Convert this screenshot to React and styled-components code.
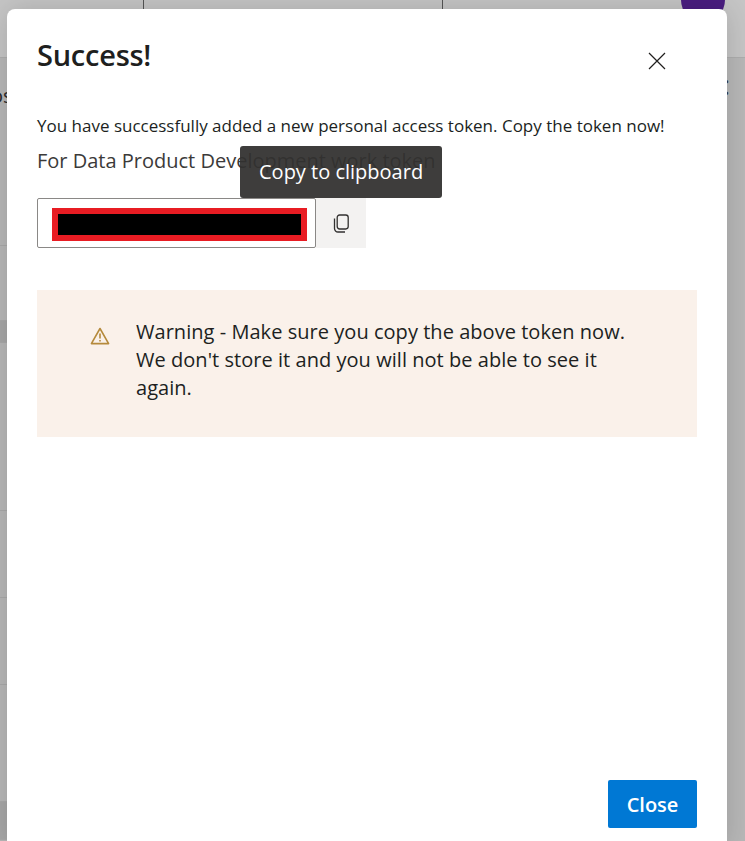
import React from 'react';
import styled, { createGlobalStyle } from 'styled-components';

const GlobalStyle = createGlobalStyle`
  html, body {
    margin: 0;
    padding: 0;
    height: 841px;
    overflow: hidden;
    background: #b8b8b8;
  }
`;

// rows of the table behind the dialog, only their edges show
const backRows = [
    { height: 116, text: 'os', side: ':', open: true },
    { height: 72, text: 'i' },
    { height: 75 },
    { height: 22, band: true },
    { height: 168 },
    { height: 87 },
    { height: 87 },
    { height: 117 },
    { height: 38, band: true },
];

const App = () => {
    return (
        <Page>
            <GlobalStyle />
            <BackHeader>
                <BackCell />
                <BackCell />
                <BackAvatarCell>
                    <Avatar />
                </BackAvatarCell>
            </BackHeader>
            {backRows.map((row, index) => (
                <BackRow key={index} $height={row.height} $band={row.band} $open={row.open}>
                    <BackText>{row.text}</BackText>
                    <BackSide>{row.side}</BackSide>
                </BackRow>
            ))}
            <Modal>
                <ModalHeader>
                    <Title>Success!</Title>
                    <CloseButton aria-label="Close">
                        <svg width="18" height="18" viewBox="0 0 18 18" fill="none" stroke="#201f1e" strokeWidth="1.2">
                            <path d="M1 1 L17 17 M17 1 L1 17" />
                        </svg>
                    </CloseButton>
                </ModalHeader>

                <Message>You have successfully added a new personal access token. Copy the token now!</Message>
                <TokenName>For Data Product Development work token</TokenName>

                <TokenRow>
                    <TokenBox>
                        <Redaction />
                    </TokenBox>
                    <CopyButton aria-label="Copy to clipboard">
                        <svg width="17" height="19" viewBox="0 0 17 19" fill="none" stroke="#323130" strokeWidth="1.3">
                            <rect x="4.2" y="1" width="11" height="14" rx="2.4" />
                            <path d="M1.5 4.5 V14.5 A3.5 3.5 0 0 0 5 18 H12" />
                        </svg>
                    </CopyButton>
                    <Tooltip>Copy to clipboard</Tooltip>
                </TokenRow>

                <WarningBar>
                    <svg width="20" height="18" viewBox="0 0 20 18" fill="none" stroke="#b58a3c" strokeWidth="1.6">
                        <path d="M10 1.5 L18.6 16.6 H1.4 Z" strokeLinejoin="round" />
                        <path d="M10 6.5 V11.5 M10 13 V14.6" />
                    </svg>
                    <WarningText>
                        Warning - Make sure you copy the above token now. We don't store it and you will not be able to see it again.
                    </WarningText>
                </WarningBar>

                <Footer>
                    <PrimaryButton>Close</PrimaryButton>
                </Footer>
            </Modal>
        </Page>
    );
};

export default App;

const Page = styled.div`
  position: relative;
  width: 745px;
  height: 841px;
  overflow: hidden;
  background: #b8b8b8;
  font-family: "Open Sans", "Noto Sans", sans-serif;
`;

const BackHeader = styled.div`
  display: grid;
  grid-template-columns: 144px 299px 1fr;
  height: 57px;
  background: #c6c6c6;
  border-bottom: 1px solid #aeaeae;
`;

const BackCell = styled.div`
  border-right: 1px solid #555555;
`;

const BackAvatarCell = styled.div`
  display: flex;
  justify-content: flex-end;
  padding-right: 20px;
`;

const Avatar = styled.div`
  width: 44px;
  height: 44px;
  margin-top: -22px;
  border-radius: 50%;
  background: #4a1d80;
`;

const BackRow = styled.div`
  box-sizing: border-box;
  display: flex;
  justify-content: space-between;
  width: ${(props) => (props.$open ? '100%' : '100px')};
  height: ${(props) => props.$height}px;
  background: ${(props) => (props.$band ? '#a8a8a8' : 'transparent')};
  border-bottom: ${(props) => (props.$open ? 'none' : '1px solid #aaaaaa')};
  overflow: hidden;
`;

const BackText = styled.span`
  margin: 26px 0 0 -9px;
  font-size: 20px;
  line-height: 24px;
  color: #2a2a2a;
`;

const BackSide = styled.span`
  margin: 8px 15px 0 0;
  font-size: 28px;
  line-height: 36px;
  color: #333333;
`;

const Modal = styled.div`
  position: absolute;
  left: 7px;
  top: 9px;
  box-sizing: border-box;
  display: flex;
  flex-direction: column;
  width: 720px;
  height: 840px;
  padding: 24px 30px 0;
  background: #ffffff;
  border-radius: 8px 8px 0 0;
  box-shadow: 0 0 30px rgba(0, 0, 0, 0.16);
`;

const ModalHeader = styled.div`
  display: flex;
  justify-content: space-between;
  align-items: flex-start;
  margin-bottom: 38px;
`;

const Title = styled.h1`
  margin: 0;
  font-size: 29px;
  line-height: 44px;
  font-weight: 600;
  letter-spacing: -0.25px;
  color: #201f1e;
`;

const CloseButton = styled.button`
  display: flex;
  margin: 19px 31px 0 0;
  padding: 0;
  border: none;
  background: none;
`;

const Message = styled.p`
  margin: 0;
  font-size: 17px;
  line-height: 22px;
  color: #201f1e;
`;

const TokenName = styled.p`
  margin: 12px 0 0;
  font-size: 20px;
  line-height: 24px;
  white-space: nowrap;
  color: #3b3a39;
`;

const TokenRow = styled.div`
  position: relative;
  display: flex;
  margin-top: 25px;
  height: 50px;
`;

const TokenBox = styled.div`
  box-sizing: border-box;
  display: flex;
  align-items: center;
  width: 279px;
  padding: 2px 8px 0 14px;
  background: #ffffff;
  border: 1px solid #8a8886;
  border-radius: 2px;
`;

const Redaction = styled.div`
  box-sizing: border-box;
  width: 256px;
  height: 33px;
  background: #000000;
  border: 6px solid #e81c23;
`;

const CopyButton = styled.button`
  display: flex;
  align-items: center;
  justify-content: center;
  width: 50px;
  padding: 0;
  border: none;
  background: #f3f2f1;
`;

const Tooltip = styled.div`
  position: absolute;
  left: 203px;
  top: -52px;
  padding: 0 19px;
  height: 52px;
  line-height: 52px;
  font-size: 20px;
  color: #ffffff;
  white-space: nowrap;
  background: rgba(50, 49, 48, 0.94);
  border-radius: 3px;
`;

const WarningBar = styled.div`
  display: flex;
  align-items: flex-start;
  gap: 26px;
  margin-top: 42px;
  padding: 28px 70px 35px 53px;
  background: #faf1ea;

  svg {
    flex: none;
    margin-top: 9px;
  }
`;

const WarningText = styled.div`
  font-size: 20px;
  line-height: 28px;
  letter-spacing: 0.04px;
  color: #201f1e;
`;

const Footer = styled.div`
  display: flex;
  justify-content: flex-end;
  margin-top: auto;
  padding-bottom: 21px;
`;

const PrimaryButton = styled.button`
  width: 89px;
  height: 48px;
  font-family: inherit;
  font-size: 20px;
  font-weight: 600;
  color: #ffffff;
  background: #0078d4;
  border: none;
  border-radius: 2px;
`;
